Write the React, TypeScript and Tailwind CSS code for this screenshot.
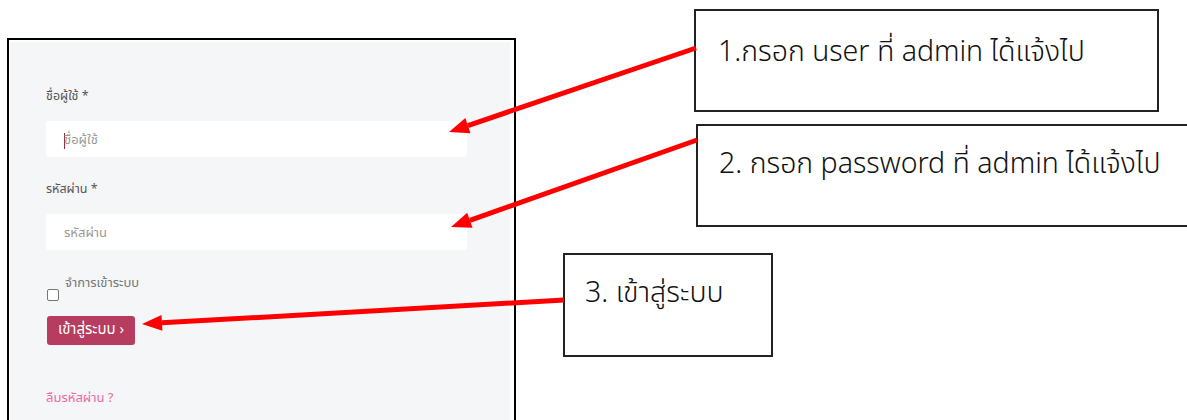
import React from "react";

type Arrow = { x1: number; y1: number; x2: number; y2: number };

const arrows: Arrow[] = [
  { x1: 696, y1: 48, x2: 449, y2: 132 },
  { x1: 697, y1: 140, x2: 451, y2: 227 },
  { x1: 564, y1: 300, x2: 142, y2: 324 },
];

function head(a: Arrow) {
  const dx = a.x2 - a.x1;
  const dy = a.y2 - a.y1;
  const len = Math.hypot(dx, dy);
  const ux = dx / len;
  const uy = dy / len;
  const L = 20;
  const W = 8;
  const bx = a.x2 - ux * L;
  const by = a.y2 - uy * L;
  const px = -uy;
  const py = ux;
  return {
    pts: `${a.x2},${a.y2} ${bx + px * W},${by + py * W} ${bx - px * W},${by - py * W}`,
    bx,
    by,
  };
}

export default function App() {
  return (
    <div
      className="relative w-[1187px] h-[420px] overflow-hidden bg-white"
      style={{ fontFamily: "Tahoma, 'Noto Sans Thai', 'Leelawadee UI', 'Noto Sans', sans-serif" }}
    >
      {/* login panel */}
      <div className="ml-[7px] mt-[38px] w-[509px] h-[390px] border-[2.5px] border-black pl-px pr-[4px] pt-[2px] bg-white">
        <div className="h-full bg-[#f5f6f8] pl-[36px] pt-[46px] text-[12.5px] text-[#555]">
          <div className="leading-[18px]">ชื่อผู้ใช้ *</div>
          <div className="mt-[15px] w-[421px] h-[36px] bg-white rounded-[3px] flex items-center pl-[18px] pt-[3px] text-[13px] text-[#9a9a9a]">
            <span className="w-px h-[16px] bg-[#a0302f] mr-[-1px]" />
            <span>ชื่อผู้ใช้</span>
          </div>
          <div className="mt-[24px] leading-[18px]">รหัสผ่าน *</div>
          <div className="mt-[15px] w-[421px] h-[36px] bg-white rounded-[3px] flex items-center pl-[18px] pt-[3px] text-[13px] text-[#9a9a9a]">
            <span>รหัสผ่าน</span>
          </div>
          <div className="mt-[25px] h-[27px] flex">
            <div className="mt-[14px] ml-px w-[12px] h-[12px] border border-[#767676] rounded-[2px] bg-white" />
            <span className="ml-[6px] text-[13px] leading-[16px] text-[#777]">จำการเข้าระบบ</span>
          </div>
          <div className="mt-[14px] ml-px w-[88px] h-[29px] rounded-[3px] bg-[#b63c60] text-white text-[15px] flex items-center justify-center">
            เข้าสู่ระบบ ›
          </div>
          <div className="mt-[44px] leading-[18px] text-[13px] text-[#ee6aa7]">ลืมรหัสผ่าน ?</div>
        </div>
      </div>

      {/* annotation boxes */}
      <div className="absolute left-[694px] top-[9px] w-[465px] h-[103px] border-2 border-[#222] bg-white pl-[22px] pt-[24px] text-[28.5px] font-light leading-[36px] text-[#111]">
        1.กรอก user ที่ admin ได้แจ้งไป
      </div>
      <div className="absolute left-[696px] top-[124px] w-[500px] h-[103px] border-2 border-[#222] bg-white pl-[21px] pt-[21px] text-[28.5px] font-light leading-[36px] text-[#111]">
        2. กรอก password ที่ admin ได้แจ้งไป
      </div>
      <div className="absolute left-[563px] top-[253px] w-[210px] h-[104px] border-2 border-[#222] bg-white pl-[20px] pt-[21px] text-[28.5px] font-light leading-[36px] text-[#111]">
        3. เข้าสู่ระบบ
      </div>

      {/* arrows */}
      <svg className="absolute left-0 top-0 pointer-events-none" width={1187} height={420}>
        {arrows.map((a, i) => {
          const h = head(a);
          return (
            <g key={i}>
              <line x1={a.x1} y1={a.y1} x2={h.bx} y2={h.by} stroke="#ff0000" strokeWidth={5} />
              <polygon points={h.pts} fill="#ff0000" />
            </g>
          );
        })}
      </svg>
    </div>
  );
}
